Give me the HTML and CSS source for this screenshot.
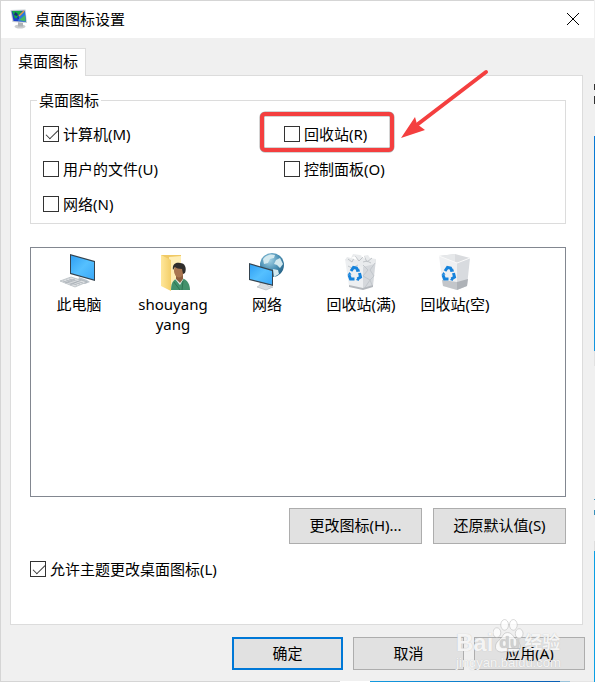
FILE: index.html
```html
<!DOCTYPE html>
<html lang="zh-CN">
<head>
<meta charset="utf-8">
<title>桌面图标设置</title>
<link rel="stylesheet" href="styles.css">
</head>
<body>
<svg class="defs" width="0" height="0" aria-hidden="true">
  <defs>
    <linearGradient id="screen" x1="0" y1="0" x2="1" y2="1">
      <stop offset="0" stop-color="#2f9ff3"/><stop offset=".5" stop-color="#55c0ff"/><stop offset="1" stop-color="#3aa8f8"/>
    </linearGradient>
    <linearGradient id="folder" x1="0" y1="0" x2="1" y2="0">
      <stop offset="0" stop-color="#ffe79b"/><stop offset="1" stop-color="#f3ce68"/>
    </linearGradient>
    <radialGradient id="globe" cx=".4" cy=".3" r=".75">
      <stop offset="0" stop-color="#a5d3e6"/><stop offset=".55" stop-color="#4c91b5"/><stop offset="1" stop-color="#1f5c80"/>
    </radialGradient>
    <g id="recycle" fill="none" stroke="#1683dc" stroke-width="3">
      <path d="M12 19l2.500-3.500 3 .5 1.500 3M20.500 21l1 4-3 2M15.500 27h-4l-1.500-4"/>
      <path d="M17 20l4-.5-1-3zM19 25l-2 3 3 1zM8.500 23l2-3 2 2.500z" fill="#1683dc" stroke="none"/>
    </g>
  </defs>
</svg>
<main class="dialog">
  <header class="titlebar">
    <svg class="app-icon" viewBox="0 0 18 20" aria-hidden="true">
      <ellipse cx="10" cy="17.500" rx="5.500" ry="2" fill="#c9cbcd"/>
      <path d="M8 13l5 1v3.500H8z" fill="#aeb2b5"/>
      <path d="M.5 1l15-.5 1.500 13.500L2.500 13z" fill="#c5ccd2"/>
      <path d="M1.500 2l13.200-.3 1.200 11L3.500 12z" fill="#1d3fc8"/>
      <path d="M10 5l5-3 .9 10.700L8 12z" fill="#2b76df"/>
      <path d="M2 2h10l-3 4-2 .5 1 2-3 1z" fill="#13a944"/>
      <path d="M9 11l6-5 .7 6.500z" fill="#46bb62"/>
      <path d="M9 7l5-5" stroke="#e7a335" stroke-width="1.500"/>
      <path d="M5 3l3 2-1 2-3-1zM7 8l2 1-1 1z" fill="#152b78"/>
    </svg>
    <h1 class="title">桌面图标设置</h1>
    <button class="close" type="button" aria-label="关闭">
      <svg viewBox="0 0 14 14" aria-hidden="true"><path d="M1 1l12 12M13 1L1 13"/></svg>
    </button>
  </header>

  <form class="content">
    <div class="tabs" role="tablist">
      <button class="tab" type="button" role="tab" aria-selected="true">桌面图标</button>
    </div>
    <section class="panel">
      <fieldset class="group">
        <legend>桌面图标</legend>
        <div class="options">
          <label class="check"><input type="checkbox" checked>计算机(M)</label>
          <div class="marked">
            <label class="check"><input type="checkbox">回收站(R)</label>
            <svg class="callout" viewBox="0 0 232 88" aria-hidden="true">
              <rect class="callout-shadow" x="4" y="46" width="130" height="36" rx="3"/>
              <rect class="callout-box" x="4" y="46" width="130" height="36" rx="3"/>
              <path class="arrow-shaft" d="M228 4L160 56"/>
              <path class="arrow-head" d="M143 70L157 49L159 56L167 62Z"/>
            </svg>
          </div>
          <label class="check"><input type="checkbox">用户的文件(U)</label>
          <label class="check"><input type="checkbox">控制面板(O)</label>
          <label class="check"><input type="checkbox">网络(N)</label>
        </div>
      </fieldset>

      <ul class="icons">
        <li class="item">
          <svg viewBox="0 0 40 40" aria-hidden="true">
            <path d="M20 25l8 3 3 2-5 2-7-3z" fill="#bcc4cb"/>
            <path d="M11 2l25 7v20l-25-7z" fill="#34434f"/>
            <path d="M12 3.500l23 6.500v17.500L12 21z" fill="url(#screen)"/>
            <path d="M1 29l11-4 16 5-12 5z" fill="#dde0e3" stroke="#a5acb2" stroke-width=".6"/>
            <path d="M4 29l14 4M7 28l14 4M10 27l14 4M6 31l10-4M11 33l11-5" stroke="#a4abb2" stroke-width=".7"/>
          </svg>
          <span>此电脑</span>
        </li>
        <li class="item">
          <svg viewBox="0 0 40 40" aria-hidden="true">
            <path d="M8 3h20v31H8z" fill="#f0c965"/>
            <path d="M16 5l12-1v29l-11 2z" fill="#ffeeb5"/>
            <path d="M8 3l10 5v31L8 34z" fill="url(#folder)"/>
            <path d="M18 38c0-9 4-12 9-12s10 4 10 12z" fill="#43916c"/>
            <path d="M22 27l5 6 4-7z" fill="#e9f0ec"/>
            <path d="M23 21h7v6l-3 4-4-4z" fill="#8f603f"/>
            <ellipse cx="26" cy="19" rx="5" ry="6.500" fill="#a97650"/>
            <path d="M20 18c-1-6 3-8 7-7 5 0 7 5 5 10l-2 1-1-5c-3 0-6-1-7-2z" fill="#2f2d2b"/>
            <path d="M21 30l6 8M30 29l-1 9" stroke="#2e7453"/>
          </svg>
          <span>shouyang yang</span>
        </li>
        <li class="item">
          <svg viewBox="0 0 40 40" aria-hidden="true">
            <circle cx="25" cy="13" r="12" fill="url(#globe)"/>
            <path d="M16 7c4-5 9-5 12-4l-1 3-4 1-2 4-4 1zM29 8l4-2 3 6-3 4-3-3-3-1zM26 17l5 1 1 4-5 3z" fill="#d3e9ef"/>
            <path d="M13 28l8 2v4l5 1-7 3-9-3 3-2z" fill="#d9dde0" stroke="#a2aab0" stroke-width=".5"/>
            <path d="M2 11l24 7v16L2 28z" fill="#34434f"/>
            <path d="M3 12.500l22 6.500v13.500L3 27z" fill="url(#screen)"/>
          </svg>
          <span>网络</span>
        </li>
        <li class="item">
          <svg viewBox="0 0 40 40" aria-hidden="true">
            <path d="M4 7l18 5v25L8 34z" fill="#edeff1"/>
            <path d="M22 12l13-5-3 27-10 3z" fill="#d5d8dc"/>
            <path d="M4 8l2-3 4 1 2-4 7 1 2 1 6-1 2 3 6 1-1 5-13 3z" fill="#e9ebed"/>
            <path d="M7 7l4 3 3-6 4 5 5-5 3 6 5-4M22 10l4-1 4 2" fill="none" stroke="#c0c4c8"/>
            <path d="M10 6l4-2 2 4zM20 4l3-1 1 4z" fill="#fff"/>
            <path d="M22 13l5 5-5 6 7 4-6 9M34 11l-5 7 4 6-4 4 2 5M7 14l4 2 6-3" fill="none" stroke="#c2c7cc"/>
            <path d="M8 33l14 3 10-3v2l-10 3-14-3z" fill="#b4b8bd"/>
            <use href="#recycle" x="-2"/>
          </svg>
          <span>回收站(满)</span>
        </li>
        <li class="item">
          <svg viewBox="0 0 40 40" aria-hidden="true">
            <path d="M4 4l16-2 15 4-13 6z" fill="#d9dbde"/>
            <path d="M4 4l16-2v9z" fill="#e6e8ea"/>
            <path d="M4 4l18 7v27L8 34z" fill="#eff0f2"/>
            <path d="M22 11l13-5-3 28-10 4z" fill="#d8dbdf"/>
            <path d="M7 28l15 2v8L8 34z" fill="#c3c6ca"/>
            <path d="M22 30l11-3-1 7-10 4z" fill="#aeb2b7"/>
            <path d="M4 4l18 7 13-5" fill="none" stroke="#fafafa"/>
            <use href="#recycle" x="-2"/>
          </svg>
          <span>回收站(空)</span>
        </li>
      </ul>

      <div class="actions">
        <button class="button wide" type="button">更改图标(H)...</button>
        <button class="button wide" type="button">还原默认值(S)</button>
      </div>
      <label class="check theme"><input type="checkbox" checked>允许主题更改桌面图标(L)</label>
    </section>
    <footer class="footer">
      <button class="button primary" type="button">确定</button>
      <button class="button" type="button">取消</button>
      <button class="button" type="button">应用(A)</button>
    </footer>
  </form>
  <div class="watermark">
    <div class="brand">
      <span>Bai</span>
      <span class="paw">
        <svg viewBox="0 0 32 36" aria-hidden="true">
          <ellipse cx="4" cy="14" rx="4" ry="5"/><ellipse cx="12" cy="6" rx="4" ry="5.500"/>
          <ellipse cx="21" cy="6" rx="4" ry="5.500"/><ellipse cx="27" cy="15" rx="4" ry="5"/>
          <path d="M15 14c5 0 6 5 10 8s5 12-3 12c-4 0-8-1-13 0-8 0-8-8-3-12s4-8 9-8z"/>
        </svg>
        <span class="du">du</span>
      </span>
      <span class="cn">经验</span>
    </div>
    <div class="site">jingyan.baidu.com</div>
  </div>
</main>
</body>
</html>
```
FILE: styles.css
```css
* {
  box-sizing: border-box;
}

body {
  margin: 0;
  min-height: 100vh;
  display: flex;
  padding: 0 1px 1px 0;
  font: 15px/20px "Noto Sans", "Noto Sans CJK SC", sans-serif;
  color: #000;
  /* slivers of the windows behind the dialog: right edge, then bottom edge */
  background:
    linear-gradient(#f0f0f0 84px, #333 84px, #333 90px, #f0f0f0 90px, #f0f0f0 96px, #333 96px, #333 104px, #f0f0f0 104px, #f0f0f0 136px, #0878d4 136px, #1397e0 351px, #e2e2e2 351px, #e2e2e2 366px, #f0f0f0 366px, #f0f0f0 499px, #3a91bb 499px, #3a91bb 500px, #f0f0f0 500px, #f0f0f0 510px, #3a91bb 510px, #3a91bb 515px, #f0f0f0 515px, #f0f0f0 541px, #ddd 541px, #ddd 551px, #0a9fe4 551px) right / 1px 100% no-repeat,
    linear-gradient(90deg, #d5d5d5 340px, #fff 340px, #fff 370px, #139be0 370px, #0b5fb5 560px, #9bc4dc 560px, #9bc4dc 570px, #e5e5e5 570px) bottom / 100% 1px no-repeat;
}

button,
input {
  font: inherit;
  color: inherit;
  margin: 0;
}

.defs {
  position: absolute;
}

.dialog {
  position: relative;
  flex: 1;
  display: flex;
  flex-direction: column;
  background: #f0f0f0;
  border: solid #d5d5d5;
  border-width: 1px 0 0 1px;
}

.titlebar {
  display: flex;
  align-items: center;
  height: 37px;
  padding: 0 14px 2px 9px;
  background: #fff;
}

.app-icon {
  width: 18px;
  height: 20px;
  margin-right: 7px;
}

.title {
  flex: 1;
  margin: 0;
  font-size: 15px;
  font-weight: 400;
}

.close {
  display: flex;
  padding: 0;
  border: 0;
  background: none;
}

.close svg {
  width: 14px;
  height: 14px;
  fill: none;
  stroke: #000;
}

.content {
  flex: 1;
  display: flex;
  flex-direction: column;
  padding: 10px 9px 11px;
}

.tabs {
  display: flex;
}

.tab {
  position: relative;
  z-index: 1;
  height: 28px;
  margin-bottom: -1px;
  padding: 0 7px 3px;
  border: 1px solid #dcdcdc;
  border-bottom: 0;
  background: #fff;
}

.panel {
  flex: 1;
  margin-right: 2px;
  padding: 14px 16px 16px 19px;
  border: 1px solid #dcdcdc;
  background: #fff;
}

.group {
  min-width: 0;
  margin: 0;
  padding: 14px 12px 9px;
  border: 1px solid #dcdcdc;
}

.group legend {
  margin-left: -6px;
  padding: 0 2px;
}

.options {
  display: grid;
  grid-template-columns: 241px 1fr;
  row-gap: 15px;
}

.check {
  display: flex;
  align-items: center;
  gap: 4px;
}

.check input {
  appearance: none;
  width: 16px;
  height: 16px;
  border: 1px solid #333;
  background: #fff;
}

.check input:checked::before {
  content: "";
  display: block;
  width: 11px;
  height: 5px;
  margin: 3px 2px;
  border: solid #333;
  border-width: 0 0 1px 1px;
  transform: rotate(-45deg);
}

.marked {
  position: relative;
}

.callout {
  position: absolute;
  left: -26px;
  top: -56px;
  width: 232px;
  height: 88px;
  fill: none;
  pointer-events: none;
}

.callout-box {
  stroke: #f43f3f;
  stroke-width: 4px;
}

.callout-shadow {
  stroke: #aaa;
  stroke-width: 5px;
}

.arrow-shaft {
  stroke: #f43f3f;
  stroke-width: 4px;
  stroke-linecap: round;
}

.arrow-head {
  fill: #f43f3f;
}

.icons {
  display: flex;
  flex-wrap: wrap;
  align-content: flex-start;
  min-height: 250px;
  margin: 23px 0 11px;
  padding: 4px 0 0 1px;
  border: 1px solid #828790;
  list-style: none;
}

.item {
  display: flex;
  flex-direction: column;
  align-items: center;
  gap: 2px;
  width: 94px;
  padding: 0 10px;
  text-align: center;
}

.item svg {
  width: 40px;
  height: 40px;
}

.item span {
  white-space: nowrap;
}

.item:nth-child(2) span {
  white-space: normal;
}

.actions {
  display: flex;
  justify-content: flex-end;
  gap: 11px;
}

.button {
  width: 111px;
  height: 33px;
  padding: 0 0 2px;
  border: 1px solid #adadad;
  background: #e1e1e1;
}

.button.wide {
  width: 133px;
  height: 36px;
}

.button.primary {
  border: 2px solid #0078d7;
}

.theme {
  margin-top: 15px;
}

.footer {
  display: flex;
  justify-content: flex-end;
  gap: 10px;
  margin-top: 12px;
}

.watermark {
  position: absolute;
  right: 30px;
  bottom: 11px;
  width: 108px;
  color: rgba(255, 255, 255, .85);
  text-shadow: 0 0 1px #bbb;
  pointer-events: none;
}

.brand {
  display: flex;
  align-items: flex-end;
  font: 700 24px/24px "Liberation Sans", "Noto Sans CJK SC", sans-serif;
}

.paw {
  position: relative;
  width: 31px;
  height: 36px;
}

.paw svg {
  display: block;
  width: 31px;
  height: 35px;
  fill: rgba(255, 255, 255, .75);
  stroke: rgba(160, 160, 160, .4);
}

.du {
  position: absolute;
  left: 6px;
  bottom: 4px;
  color: #d0d0d0;
  font-size: 17px;
  line-height: 16px;
}

.cn {
  font-size: 18px;
}

.site {
  font: 13px/15px "Liberation Sans", sans-serif;
  white-space: nowrap;
}
```
